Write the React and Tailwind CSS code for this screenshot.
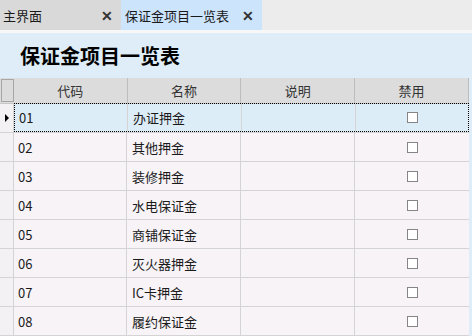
import React from "react";

const rows = [
  ["01", "办证押金"],
  ["02", "其他押金"],
  ["03", "装修押金"],
  ["04", "水电保证金"],
  ["05", "商铺保证金"],
  ["06", "灭火器押金"],
  ["07", "IC卡押金"],
  ["08", "履约保证金"],
];

const font = { fontFamily: '"Noto Sans CJK SC", "Noto Sans", sans-serif' };

function Check() {
  return <div className="w-[11px] h-[11px] border border-[#858585] bg-white" />;
}

export default function App() {
  return (
    <div className="w-[472px] h-[336px] overflow-hidden bg-[#ececec] flex flex-col text-[13px] text-[#1a1a1a]" style={font}>
      <div className="flex h-[30px] shrink-0">
        <div className="w-[121px] bg-[#d9d9d9] flex items-center justify-between pl-[3px] pr-[8px] leading-none">
          <span>主界面</span>
          <span className="font-bold text-[14px] text-[#333]">✕</span>
        </div>
        <div className="w-[141px] bg-[#cce4fc] flex items-center justify-between pl-[4px] pr-[8px] leading-none">
          <span>保证金项目一览表</span>
          <span className="font-bold text-[14px] text-[#333]">✕</span>
        </div>
      </div>
      <div className="h-[3px] bg-[#f7f7f7] shrink-0" />
      <div className="flex-1 bg-[#deedf7] flex flex-col">
        <div className="h-[45px] shrink-0 flex items-center pl-[20px] text-[20px] font-bold leading-none text-black">
          保证金项目一览表
        </div>
        <div className="mr-[3px] flex flex-col">
          <div className="flex h-[26px] bg-[#dcdcdc] border-b border-[#c8c8c8] text-[#333]">
            <div className="w-[13px] ml-[1px] my-[1px] border border-[#a6a6a6] bg-[#dcdcdc]" />
            {["代码", "名称", "说明", "禁用"].map((h) => (
              <div key={h} className="w-[114px] border-r border-[#bdbdbd] flex items-center justify-center leading-none">
                {h}
              </div>
            ))}
          </div>
          {rows.map(([code, name], i) => {
            const sel = i === 0;
            return (
              <div key={code} className={`flex h-[29px] border-b border-[#d4d4d4] ${sel ? "bg-[#ddedf7]" : "bg-[#f7f3f7]"}`}>
                <div className="w-[14px] border-r border-[#d4d4d4] bg-[#f3f1f3] flex items-center justify-center">
                  {sel && (
                    <svg width="6" height="10" viewBox="0 0 6 10"><path d="M1 1 L5 5 L1 9 Z" fill="#000" /></svg>
                  )}
                </div>
                <div className={`flex flex-1 ${sel ? "border border-dotted border-black -mt-[1px]" : ""}`}>
                  <div className="w-[113px] border-r border-[#d4d4d4] flex items-center pl-[4px] leading-none">{code}</div>
                  <div className="w-[114px] border-r border-[#d4d4d4] flex items-center pl-[5px] leading-none">{name}</div>
                  <div className="w-[114px] border-r border-[#d4d4d4]" />
                  <div className="flex-1 flex items-center justify-center">
                    <Check />
                  </div>
                </div>
              </div>
            );
          })}
        </div>
      </div>
    </div>
  );
}
